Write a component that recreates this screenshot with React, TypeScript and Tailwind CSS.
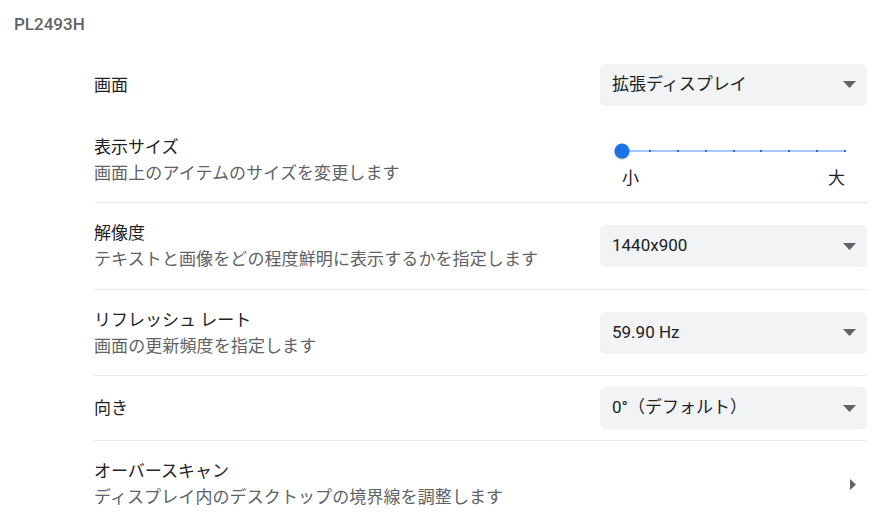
import React from 'react';

const font = { fontFamily: 'Roboto, "Noto Sans CJK JP", sans-serif' };

function SelectBox({ value }: { value: string }) {
  return (
    <div className="flex h-[42px] w-[267px] items-center justify-between rounded-[5px] bg-[#f1f3f4] pl-3 pr-[11px] text-[17px] text-[#202124]">
      <span>{value}</span>
      <svg width="13" height="7" viewBox="0 0 13 7">
        <path d="M0 0 L13 0 L6.5 7 Z" fill="#5f6368" />
      </svg>
    </div>
  );
}

function Label({ title, desc }: { title: string; desc?: string }) {
  return (
    <div className="flex flex-col leading-[26px]">
      <span className="text-[17px] text-[#202124]">{title}</span>
      {desc && <span className="text-[17px] tracking-[0.1px] text-[#5f6368]">{desc}</span>}
    </div>
  );
}

function SizeSlider() {
  const ticks = [1, 2, 3, 4, 5, 6, 7, 8];
  return (
    <div className="flex w-[267px] flex-col pl-[22px] pr-[22px] pt-[27px]">
      <div className="relative h-[14px]">
        <div className="absolute left-0 right-0 top-[6px] h-[2px] bg-[#a8c7fa]" />
        {ticks.map((t) => (
          <div
            key={t}
            className="absolute top-[6px] h-[2px] w-[2px] -translate-x-1/2 bg-[#1a73e8]"
            style={{ left: `${(t / 8) * 100}%` }}
          />
        ))}
        <div className="absolute left-0 top-0 h-[15px] w-[15px] -translate-x-1/2 -translate-y-[0.5px] rounded-full bg-[#1a73e8] shadow-[0_1px_2px_rgba(0,0,0,0.3)]" />
      </div>
      <div className="mt-[7px] flex justify-between text-[17px] leading-[26px] text-[#202124]">
        <span>小</span>
        <span>大</span>
      </div>
    </div>
  );
}

export default function App() {
  return (
    <div className="h-[518px] w-[890px] overflow-hidden bg-white" style={font}>
      <div className="flex h-[52px] items-start pl-[14px] pt-[13px]">
        <span className="text-[17px] font-medium leading-[22px] text-[#5f6368]">PL2493H</span>
      </div>
      <div className="ml-[94px] w-[773px]">
        <div className="flex h-[65px] items-center justify-between">
          <Label title="画面" />
          <SelectBox value="拡張ディスプレイ" />
        </div>
        <div className="flex h-[86px] items-start justify-between border-b border-[#e8eaed]">
          <div className="pt-[17px]">
            <Label title="表示サイズ" desc="画面上のアイテムのサイズを変更します" />
          </div>
          <SizeSlider />
        </div>
        <div className="flex h-[87px] items-center justify-between border-b border-[#e8eaed]">
          <Label title="解像度" desc="テキストと画像をどの程度鮮明に表示するかを指定します" />
          <SelectBox value="1440x900" />
        </div>
        <div className="flex h-[86px] items-center justify-between border-b border-[#e8eaed]">
          <Label title="リフレッシュ レート" desc="画面の更新頻度を指定します" />
          <SelectBox value="59.90 Hz" />
        </div>
        <div className="flex h-[65px] items-center justify-between border-b border-[#e8eaed]">
          <Label title="向き" />
          <SelectBox value="0°（デフォルト）" />
        </div>
        <div className="flex h-[86px] items-center justify-between">
          <Label title="オーバースキャン" desc="ディスプレイ内のデスクトップの境界線を調整します" />
          <svg width="6" height="11" viewBox="0 0 6 11" className="mr-[11px]">
            <path d="M0 0 L6 5.5 L0 11 Z" fill="#5f6368" />
          </svg>
        </div>
      </div>
    </div>
  );
}
